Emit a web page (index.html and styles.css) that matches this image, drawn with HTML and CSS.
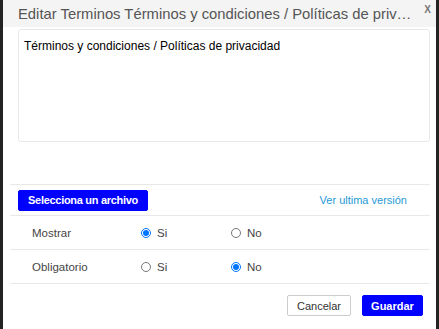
FILE: index.html
```html
<!DOCTYPE html>
<html lang="es">
<head>
<meta charset="utf-8">
<title>Editar Terminos</title>
<link rel="stylesheet" href="styles.css">
</head>
<body>
<div class="dialog">
  <div class="header">
    <div class="title">Editar Terminos Términos y condiciones / Políticas de privacidad</div>
    <span class="close">X</span>
  </div>
  <div class="content">
    <div class="editor">Términos y condiciones / Políticas de privacidad</div>
  </div>
  <div class="rows">
    <div class="row file-row">
      <button class="btn btn-primary btn-file">Selecciona un archivo</button>
      <a class="link" href="#">Ver ultima versión</a>
    </div>
    <div class="row option-row">
      <span class="label">Mostrar</span>
      <label class="opt"><input type="radio" name="mostrar" checked> Si</label>
      <label class="opt"><input type="radio" name="mostrar"> No</label>
    </div>
    <div class="row option-row">
      <span class="label">Obligatorio</span>
      <label class="opt"><input type="radio" name="oblig"> Si</label>
      <label class="opt"><input type="radio" name="oblig" checked> No</label>
    </div>
    <div class="footer">
      <button class="btn btn-default">Cancelar</button>
      <button class="btn btn-primary">Guardar</button>
    </div>
  </div>
</div>
</body>
</html>
```

FILE: styles.css
```css
html, body {
  margin: 0;
  padding: 0;
  background: #232323;
  height: 100%;
  overflow: hidden;
}
body {
  padding: 0 3px 0 3px;
  font-family: "Liberation Sans", Arial, sans-serif;
}
.dialog {
  width: 433px;
  height: 329px;
  background: #fff;
}
.header {
  height: 27px;
  background: #f4f4f4;
  padding: 0 5px 0 15px;
  display: flex;
  align-items: center;
  gap: 9px;
}
.title {
  flex: 1;
  min-width: 0;
  font-size: 14.8px;
  line-height: 17px;
  color: #555;
  white-space: nowrap;
  overflow: hidden;
  text-overflow: ellipsis;
  padding-top: 2px;
}
.close {
  align-self: flex-start;
  margin-top: 5px;
  font-size: 10px;
  line-height: 10px;
  font-weight: bold;
  color: #777;
}
.content {
  padding: 2px 6px 0 15px;
}
.editor {
  height: 102px;
  border: 1px solid #e8e8e8;
  border-radius: 3px;
  padding: 9px 5px 0 5px;
  font-size: 12px;
  color: #000;
}
.rows {
  margin: 42px 6px 0 7px;
}
.row {
  border-top: 1px solid #e8e8e8;
  display: flex;
  align-items: center;
}
.file-row {
  height: 30px;
  padding: 0 23px 0 8px;
  justify-content: space-between;
}
.btn {
  font-family: "Liberation Sans", Arial, sans-serif;
  font-size: 11px;
  border-radius: 2px;
  height: 21px;
  padding: 0 10px;
  cursor: pointer;
}
.btn-primary {
  background: #0000ff;
  border: 1px solid #0000ff;
  color: #fff;
  font-weight: bold;
}
.btn-file {
  width: 130px;
  padding: 0;
  letter-spacing: -0.3px;
}
.link {
  font-size: 11px;
  color: #1f9ad6;
  text-decoration: none;
}
.option-row {
  height: 33px;
  font-size: 11.5px;
  color: #444;
}
.label {
  width: 109px;
  padding-left: 22px;
}
.opt {
  width: 90px;
  display: flex;
  align-items: center;
  color: #444;
}
.opt input {
  margin: 0 6px 0 0;
  width: 10px;
  height: 10px;
}
.footer {
  border-top: 1px solid #e8e8e8;
  display: flex;
  justify-content: flex-end;
  gap: 11px;
  padding: 11px 7px 0 0;
}
.btn-default {
  background: #fff;
  border: 1px solid #ccc;
  color: #333;
  width: 64px;
  padding: 0;
}
.footer .btn-primary {
  width: 61px;
  padding: 0;
}
```
